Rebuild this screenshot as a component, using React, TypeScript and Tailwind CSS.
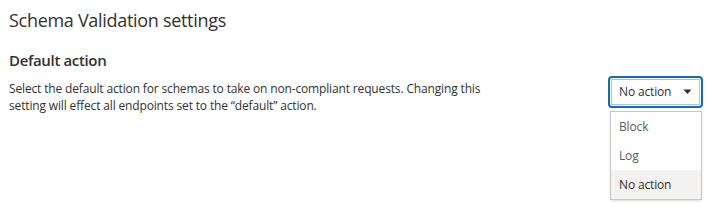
const OPTIONS = ['Block', 'Log', 'No action'];

export default function App() {
  const selected = 'No action';

  return (
    <div className="w-[709px] h-[210px] bg-white text-[#323130] font-['Open_Sans',sans-serif] overflow-hidden">
      <div className="pl-[9px] pt-[7px]">
        <h1 className="text-[18px] leading-[26px] font-normal tracking-[-0.3px]">Schema Validation settings</h1>
        <div className="flex justify-between mt-[16px] pr-[6px]">
          <div>
            <h2 className="text-[15px] leading-[22px] font-semibold tracking-[-0.35px]">Default action</h2>
            <p className="mt-[9px] text-[12px] leading-[17px] tracking-[-0.15px] whitespace-nowrap">
              Select the default action for schemas to take on non-compliant requests. Changing this
              <br />
              setting will effect all endpoints set to the “default” action.
            </p>
          </div>
          <div className="relative mt-[27px] w-[95px]">
            <button className="w-full h-[32px] flex items-center justify-between pl-[9px] pr-[9px] rounded-[4px] border-2 border-[#0f6cbd] shadow-[inset_0_0_0_1px_#fff,inset_0_0_0_2px_#9cc4ee] bg-white text-[12px] tracking-[-0.15px]">
              <span>{selected}</span>
              <svg width="9" height="6" viewBox="0 0 9 6">
                <path d="M0.5 0.5h8L4.5 5z" fill="#323130" />
              </svg>
            </button>
            <ul className="absolute left-[2px] right-[1px] top-[35px] border border-[#c8c6c4] bg-white shadow-sm text-[12px] tracking-[-0.15px]">
              {OPTIONS.map((o) => (
                <li
                  key={o}
                  className={`h-[29px] flex items-center pl-[8px] ${o === selected ? 'bg-[#f3f2f1] text-[#323130]' : 'text-[#605e5c]'}`}
                >
                  {o}
                </li>
              ))}
            </ul>
          </div>
        </div>
      </div>
    </div>
  );
}
